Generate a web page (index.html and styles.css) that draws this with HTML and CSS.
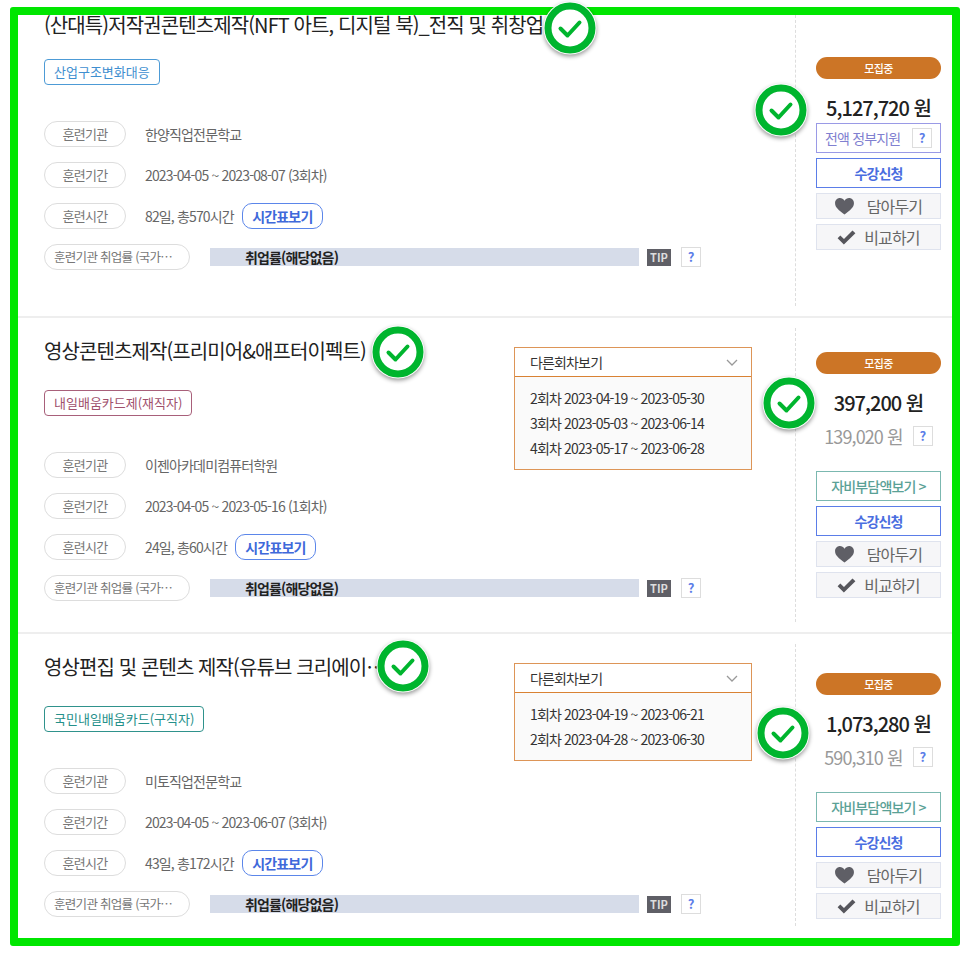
FILE: index.html
```html
<!DOCTYPE html>
<html lang="ko">
<head>
    <meta charset="UTF-8">
    <title>훈련과정 목록</title>
    <link rel="stylesheet" href="styles.css">
</head>
<body>
<svg class="icon-defs" width="0" height="0">
    <symbol id="ico-mark" viewBox="0 0 54 54">
        <circle cx="27" cy="27" r="26.500" fill="#fff"/>
        <circle cx="27" cy="27" r="22" fill="#fff" stroke="#00b52e" stroke-width="7"/>
        <path d="M17.500 27.500l7 7 12-13" fill="none" stroke="#00b52e" stroke-width="4" stroke-linecap="round" stroke-linejoin="round"/>
    </symbol>
    <symbol id="ico-heart" viewBox="0 0 20 18">
        <path d="M10 17.500C4 13 0 9.800 0 5.500 0 2.300 2.300 0 5.200 0 7.100 0 8.900 1 10 2.800 11.100 1 12.900 0 14.800 0 17.700 0 20 2.300 20 5.500 20 9.800 16 13 10 17.500z" fill="#5f5f66"/>
    </symbol>
    <symbol id="ico-check" viewBox="0 0 20 16">
        <path d="M7.200 15.500L0.500 8.800 3.400 5.800 7.300 9.600 16.400 0.500 19.500 3.500z" fill="#56565c"/>
    </symbol>
</svg>

<div class="frame">

    <div class="course course--first">
        <div class="course__main">
            <h2 class="course__title">(산대특)저작권콘텐츠제작(NFT 아트, 디지털 북)_전직 및 취창업</h2>
            <span class="tag tag--blue">산업구조변화대응</span>
            <div class="info">
                <div class="info__row"><span class="pill">훈련기관</span><span>한양직업전문학교</span></div>
                <div class="info__row"><span class="pill">훈련기간</span><span>2023-04-05 ~ 2023-08-07 (3회차)</span></div>
                <div class="info__row"><span class="pill">훈련시간</span><span>82일, 총570시간</span><a class="time-btn">시간표보기</a></div>
                <div class="info__row"><span class="pill pill--wide">훈련기관 취업률 (국가…</span><div class="rate">취업률(해당없음)</div><span class="tip">TIP</span><span class="help">?</span></div>
            </div>
        </div>
        <div class="course__side">
            <div class="status">모집중</div>
            <div class="price">5,127,720 원</div>
            <div class="btn btn--support">전액 정부지원<span class="help">?</span></div>
            <a class="btn btn--apply">수강신청</a>
            <a class="btn btn--plain"><svg class="ico-heart"><use href="#ico-heart"/></svg>담아두기</a>
            <a class="btn btn--plain btn--compare"><svg class="ico-check"><use href="#ico-check"/></svg>비교하기</a>
        </div>
    </div>

    <div class="course course--second">
        <div class="course__main">
            <h2 class="course__title">영상콘텐츠제작(프리미어&amp;애프터이펙트)</h2>
            <span class="tag tag--rose">내일배움카드제(재직자)</span>
            <div class="info">
                <div class="info__row"><span class="pill">훈련기관</span><span>이젠아카데미컴퓨터학원</span></div>
                <div class="info__row"><span class="pill">훈련기간</span><span>2023-04-05 ~ 2023-05-16 (1회차)</span></div>
                <div class="info__row"><span class="pill">훈련시간</span><span>24일, 총60시간</span><a class="time-btn">시간표보기</a></div>
                <div class="info__row"><span class="pill pill--wide">훈련기관 취업률 (국가…</span><div class="rate">취업률(해당없음)</div><span class="tip">TIP</span><span class="help">?</span></div>
            </div>
            <div class="rounds">
                <div class="rounds__head">다른회차보기
                    <svg class="rounds__arrow" width="12" height="7" viewBox="0 0 12 7"><path d="M1 1l5 5 5-5" fill="none" stroke="#999" stroke-width="1.300"/></svg>
                </div>
                <ul class="rounds__list">
                    <li>2회차 2023-04-19 ~ 2023-05-30</li>
                    <li>3회차 2023-05-03 ~ 2023-06-14</li>
                    <li>4회차 2023-05-17 ~ 2023-06-28</li>
                </ul>
            </div>
        </div>
        <div class="course__side">
            <div class="status">모집중</div>
            <div class="price">397,200 원</div>
            <div class="price-sub">139,020 원<span class="help">?</span></div>
            <a class="btn btn--self">자비부담액보기 &gt;</a>
            <a class="btn btn--apply">수강신청</a>
            <a class="btn btn--plain"><svg class="ico-heart"><use href="#ico-heart"/></svg>담아두기</a>
            <a class="btn btn--plain btn--compare"><svg class="ico-check"><use href="#ico-check"/></svg>비교하기</a>
        </div>
    </div>

    <div class="course course--third">
        <div class="course__main">
            <h2 class="course__title">영상편집 및 콘텐츠 제작(유튜브 크리에이…</h2>
            <span class="tag tag--teal">국민내일배움카드(구직자)</span>
            <div class="info">
                <div class="info__row"><span class="pill">훈련기관</span><span>미토직업전문학교</span></div>
                <div class="info__row"><span class="pill">훈련기간</span><span>2023-04-05 ~ 2023-06-07 (3회차)</span></div>
                <div class="info__row"><span class="pill">훈련시간</span><span>43일, 총172시간</span><a class="time-btn">시간표보기</a></div>
                <div class="info__row"><span class="pill pill--wide">훈련기관 취업률 (국가…</span><div class="rate">취업률(해당없음)</div><span class="tip">TIP</span><span class="help">?</span></div>
            </div>
            <div class="rounds">
                <div class="rounds__head">다른회차보기
                    <svg class="rounds__arrow" width="12" height="7" viewBox="0 0 12 7"><path d="M1 1l5 5 5-5" fill="none" stroke="#999" stroke-width="1.300"/></svg>
                </div>
                <ul class="rounds__list">
                    <li>1회차 2023-04-19 ~ 2023-06-21</li>
                    <li>2회차 2023-04-28 ~ 2023-06-30</li>
                </ul>
            </div>
        </div>
        <div class="course__side">
            <div class="status">모집중</div>
            <div class="price">1,073,280 원</div>
            <div class="price-sub">590,310 원<span class="help">?</span></div>
            <a class="btn btn--self">자비부담액보기 &gt;</a>
            <a class="btn btn--apply">수강신청</a>
            <a class="btn btn--plain"><svg class="ico-heart"><use href="#ico-heart"/></svg>담아두기</a>
            <a class="btn btn--plain btn--compare"><svg class="ico-check"><use href="#ico-check"/></svg>비교하기</a>
        </div>
    </div>

    <!-- green marks drawn over the list -->
    <svg class="mark mark--1"><use href="#ico-mark"/></svg>
    <svg class="mark mark--2"><use href="#ico-mark"/></svg>
    <svg class="mark mark--3"><use href="#ico-mark"/></svg>
    <svg class="mark mark--4"><use href="#ico-mark"/></svg>
    <svg class="mark mark--5"><use href="#ico-mark"/></svg>
    <svg class="mark mark--6"><use href="#ico-mark"/></svg>
</div>
</body>
</html>
```

FILE: styles.css
```css
*, *:before, *:after {
    box-sizing: border-box;
    padding: 0;
    margin: 0;
}

body {
    background: #fff;
    font-family: "Noto Sans CJK KR", "Noto Sans", sans-serif;
    color: #666;
    font-size: 14px;
    letter-spacing: -0.85px;
}

.icon-defs {
    position: absolute;
}

/* green outline round the whole capture */
.frame {
    position: relative;
    width: 950px;
    height: 939px;
    margin: 7px 0 0 10px;
    border: 8px solid #00e600;
    border-radius: 3px;
}

.course {
    display: flex;
    border-bottom: 2px solid #eee;
}

.course--first {
    height: 303px;
}

.course--second {
    height: 316px;
}

.course--third {
    height: 302px;
    border-bottom: 0;
}

.course__main {
    position: relative;
    flex: 1;
    min-width: 0;
    padding: 23px 0 0 26px;
}

.course--first .course__main {
    padding-top: 0;
}

.course__title {
    height: 20px;
    margin-bottom: 29px;
    font-size: 20px;
    line-height: 20px;
    font-weight: 400;
    letter-spacing: -0.9px;
    color: #222;
    white-space: nowrap;
}

.course--first .course__title {
    margin-bottom: 24px;
}

.tag {
    display: inline-block;
    height: 26px;
    padding: 0 9px;
    border: 1px solid;
    border-radius: 4px;
    font-size: 13px;
    line-height: 24px;
    letter-spacing: 0;
    vertical-align: top;
}

.tag--blue {
    color: #3f8fd0;
    border-color: #4d9bd6;
}

.tag--rose {
    color: #a0506c;
    border-color: #a8607a;
}

.tag--teal {
    color: #24908a;
    border-color: #2f928c;
}

.info {
    display: flex;
    flex-direction: column;
    gap: 15px;
    margin-top: 36px;
}

.info__row {
    display: flex;
    align-items: center;
    height: 26px;
}

.pill {
    flex: none;
    width: 82px;
    height: 26px;
    margin-right: 19px;
    border: 1px solid #ddd;
    border-radius: 13px;
    font-size: 13px;
    line-height: 24px;
    letter-spacing: -0.7px;
    text-align: center;
    color: #777;
}

.pill--wide {
    width: 146px;
    margin-right: 20px;
    padding: 0 9px;
    font-size: 12.500px;
    text-align: left;
    white-space: nowrap;
}

.time-btn {
    width: 81px;
    height: 26px;
    margin-left: 8px;
    border: 1px solid #5b86ea;
    border-radius: 10px;
    font-weight: 700;
    line-height: 24px;
    text-align: center;
    color: #3f69da;
}

.rate {
    width: 429px;
    height: 18px;
    padding-left: 35px;
    background: #d6dce9;
    font-weight: 700;
    line-height: 18px;
    color: #222;
}

.tip {
    width: 24px;
    height: 17px;
    margin: 0 10px 0 8px;
    background: #5f5f66;
    font-size: 11px;
    font-weight: 700;
    line-height: 17px;
    text-align: center;
    letter-spacing: 0;
    color: #ddd;
}

.help {
    flex: none;
    display: inline-block;
    width: 20px;
    height: 20px;
    border: 1px solid #ddd;
    font-size: 13px;
    font-weight: 700;
    line-height: 18px;
    text-align: center;
    letter-spacing: 0;
    color: #5b7de8;
}

/* other rounds box, sits over the free right part of the row */
.rounds {
    position: absolute;
    top: 29px;
    left: 496px;
    width: 238px;
    border: 1px solid #dd9557;
    background: #fafafa;
}

.rounds__head {
    display: flex;
    justify-content: space-between;
    align-items: center;
    height: 29px;
    padding: 0 13px 0 15px;
    border-bottom: 1px solid #d98233;
    background: #fff;
    color: #333;
}

.rounds__list {
    padding: 9px 15px 8px;
    list-style: none;
}

.rounds__list li {
    height: 25px;
    line-height: 25px;
    color: #333;
}

.course__side {
    flex: none;
    width: 157px;
    margin: 10px 0;
    padding: 24px 11px 0 20px;
    border-left: 1px dashed #ddd;
}

.course--first .course__side {
    margin-top: 0;
    padding-top: 42px;
}

.course--third .course__side {
    padding-top: 29px;
}

.status {
    height: 22px;
    border-radius: 11px;
    background: #cc7526;
    font-size: 11px;
    font-weight: 500;
    line-height: 22px;
    letter-spacing: -0.6px;
    text-align: center;
    color: #fff;
}

.price {
    margin-top: 15px;
    font-size: 20px;
    font-weight: 500;
    line-height: 28px;
    letter-spacing: -1px;
    text-align: center;
    color: #222;
}

.price-sub {
    display: flex;
    justify-content: center;
    align-items: center;
    gap: 10px;
    height: 26px;
    margin-top: 6px;
    margin-bottom: 22px;
    font-size: 18px;
    letter-spacing: -0.9px;
    color: #999;
}

.btn {
    display: flex;
    justify-content: center;
    align-items: center;
    height: 30px;
    margin-top: 5px;
    border: 1px solid;
}

.price + .btn {
    margin-top: 1px;
}

.price-sub + .btn {
    margin-top: 0;
}

.btn--support {
    justify-content: space-between;
    padding: 0 8px;
    border-color: #9a9ae6;
    color: #8080d0;
}

.btn--apply {
    border-color: #5b7de8;
    font-weight: 700;
    color: #4a6ee0;
}

.btn--self {
    border-color: #7bb8b0;
    font-weight: 500;
    color: #5aa196;
}

.btn--plain {
    gap: 13px;
    height: 26px;
    border-color: #dfe3ee;
    background: #f6f6f8;
    font-size: 16px;
    color: #666;
}

.ico-heart {
    width: 19px;
    height: 17px;
}

.ico-check {
    width: 19px;
    height: 15px;
}

.btn--compare {
    gap: 8px;
}

/* green marks: offsets are relative to the frame's padding box */
.mark {
    position: absolute;
    width: 54px;
    height: 54px;
    filter: drop-shadow(0 2px 2px rgba(0, 0, 0, 0.4));
}

.mark--1 {
    left: 525px;
    top: -14px;
}

.mark--2 {
    left: 736px;
    top: 68px;
}

.mark--3 {
    left: 353px;
    top: 310px;
}

.mark--4 {
    left: 744px;
    top: 361px;
}

.mark--5 {
    left: 358px;
    top: 624px;
}

.mark--6 {
    left: 738px;
    top: 691px;
}
```
